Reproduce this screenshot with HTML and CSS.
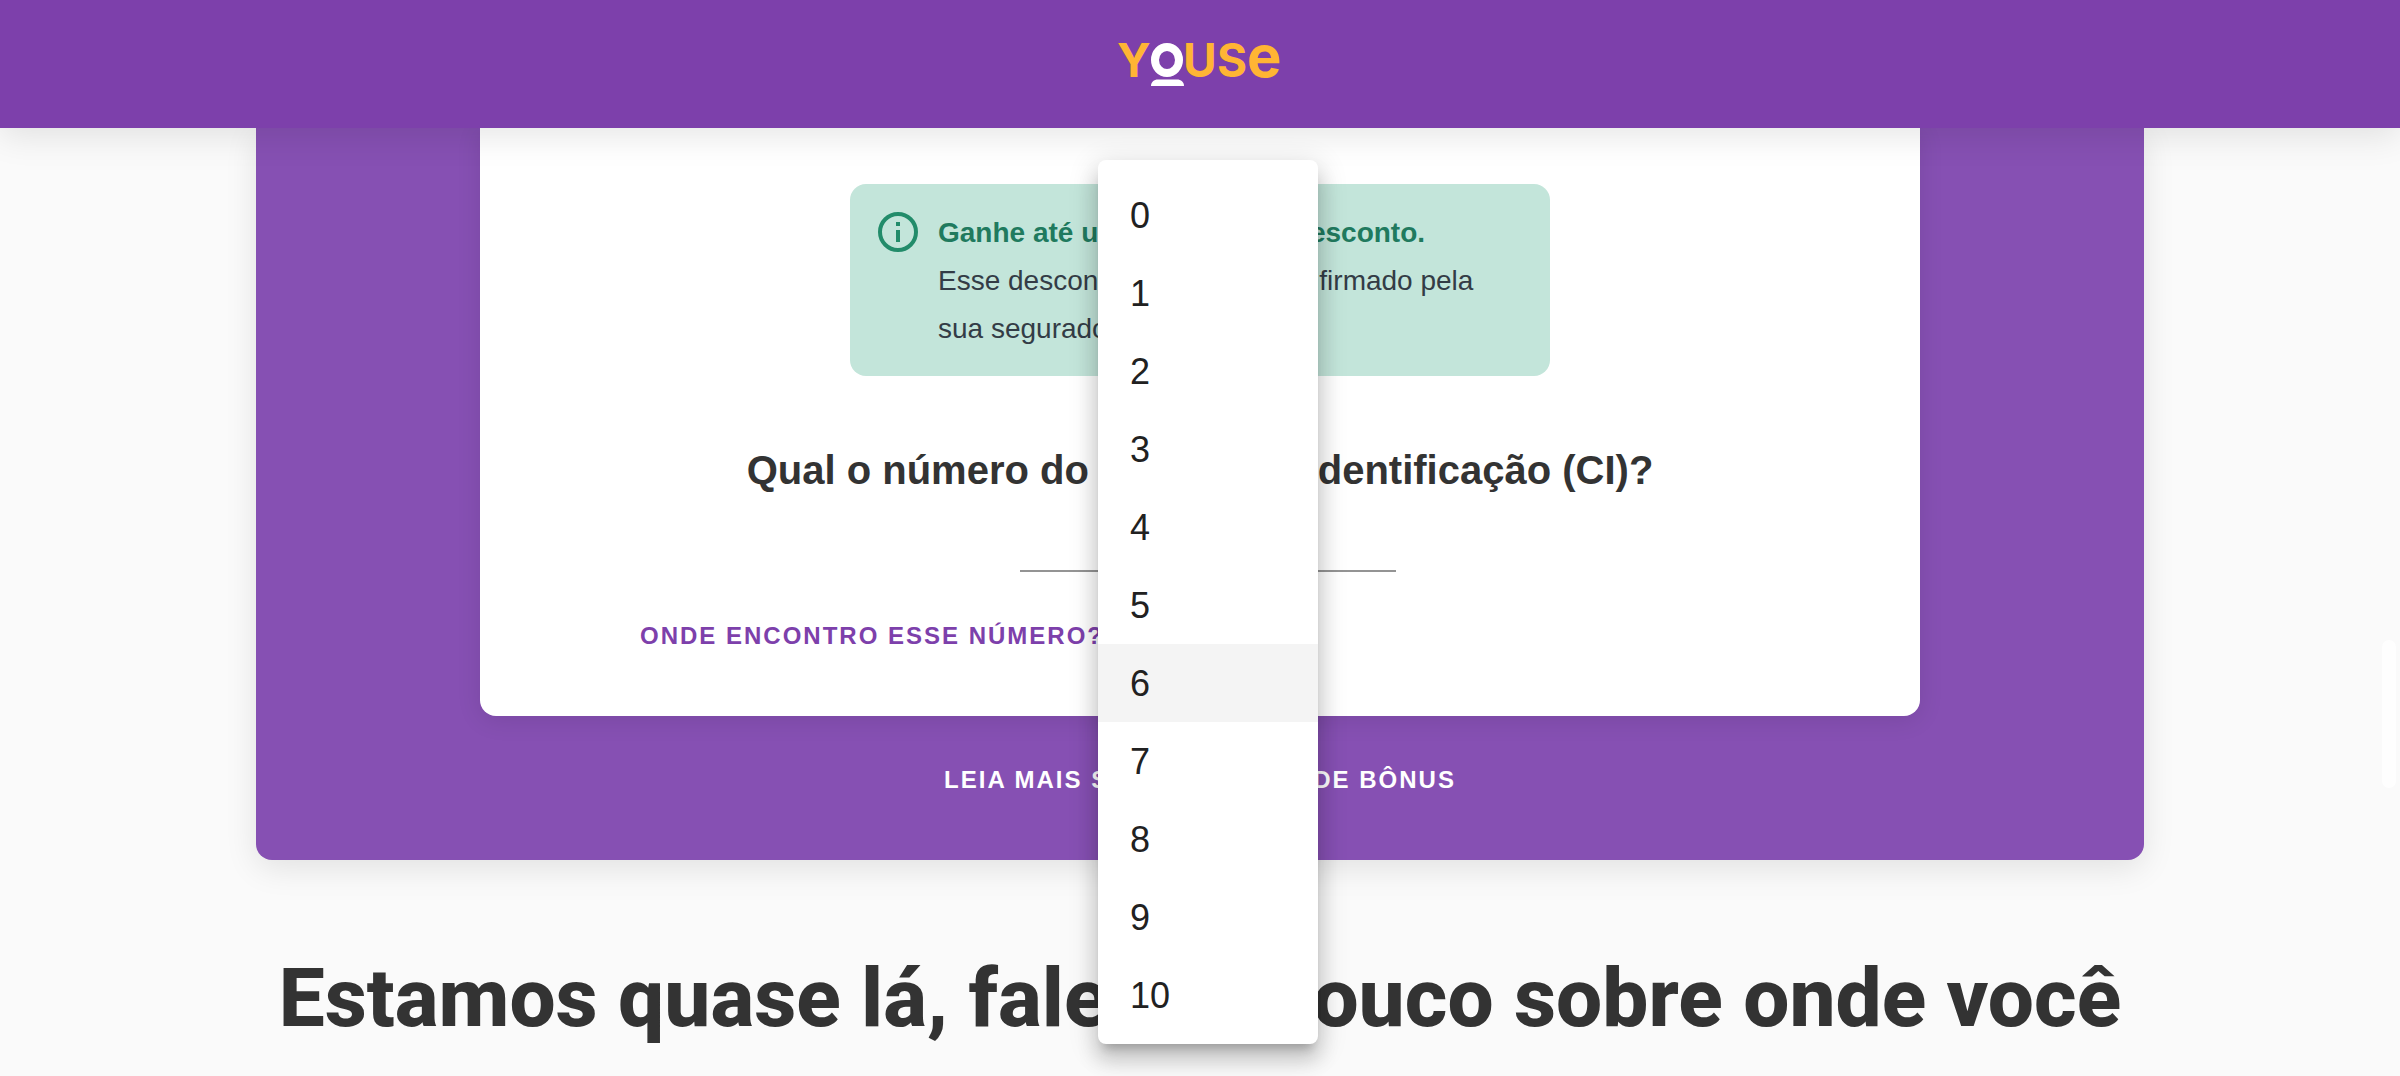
FILE: index.html
```html
<!DOCTYPE html>
<html lang="pt-BR">
<head>
  <meta charset="utf-8">
  <meta name="viewport" content="width=device-width, initial-scale=1">
  <title>Youse</title>
  <link rel="stylesheet" href="styles.css">
</head>
<body>
  <header class="topbar">
    <a class="brand" href="#" aria-label="Youse">
      <svg class="logo" viewBox="0 0 184 80" role="img" aria-label="Youse">
        <text class="logo-cap" x="9" y="53">Y</text>
        <ellipse cx="59" cy="36" rx="12" ry="13" fill="none" stroke="#fff" stroke-width="8"/>
        <path d="M43 62c0-4 3-6.500 7-6.500h19c4 0 7 2.500 7 6.500z" fill="#fff"/>
        <text class="logo-cap" x="75" y="53">U</text>
        <text class="logo-cap" x="109" y="53">S</text>
        <text class="logo-low" x="139" y="53">e</text>
      </svg>
    </a>
  </header>

  <main class="content">
    <section class="panel">
      <div class="card">
        <aside class="notice">
          <svg class="notice-icon" viewBox="0 0 40 40" aria-hidden="true">
            <circle cx="20" cy="20" r="18" fill="none" stroke="currentColor" stroke-width="4"/>
            <path d="M18 10h4v4h-4zM18 18h4v12h-4z" fill="currentColor"/>
          </svg>
          <p class="notice-text"><strong>Ganhe até uma parcela de desconto.</strong><br>Esse desconto precisa ser confirmado pela sua seguradora.</p>
        </aside>
        <h2 class="question" id="ci-label">Qual o número do Código de Identificação (CI)?</h2>
        <div class="field">
          <select class="select" aria-labelledby="ci-label">
            <option></option>
          </select>
          <ul class="menu" role="listbox" aria-labelledby="ci-label">
            <li class="option" role="option">0</li>
            <li class="option" role="option">1</li>
            <li class="option" role="option">2</li>
            <li class="option" role="option">3</li>
            <li class="option" role="option">4</li>
            <li class="option" role="option">5</li>
            <li class="option option-active" role="option">6</li>
            <li class="option" role="option">7</li>
            <li class="option" role="option">8</li>
            <li class="option" role="option">9</li>
            <li class="option" role="option">10</li>
          </ul>
        </div>
        <a class="link" href="#">ONDE ENCONTRO ESSE NÚMERO?</a>
      </div>
      <a class="link link-light" href="#">LEIA MAIS SOBRE CLASSE DE BÔNUS</a>
    </section>
    <h1 class="title">Estamos quase lá, fale um pouco sobre onde você</h1>
  </main>
  <div class="scroll-thumb"></div>
</body>
</html>
```
FILE: styles.css
```css
* {
  box-sizing: border-box;
}

body {
  min-height: 100vh;
  margin: 0;
  background: #fafafa;
  color: #333;
  font-family: "Liberation Sans", Arial, sans-serif;
}

.topbar {
  position: relative;
  z-index: 2;
  display: flex;
  justify-content: center;
  padding: 24px 0;
  background: #7d40ab;
  box-shadow: 0 8px 32px rgba(0, 0, 0, 0.1);
}

.brand {
  display: block;
}

.logo {
  display: block;
  width: 184px;
  height: 80px;
}

.logo text {
  fill: #ffb534;
  font-family: Inter, sans-serif;
  font-weight: 700;
}

.logo-cap {
  font-size: 46px;
}

.logo-low {
  font-size: 58px;
}

.panel {
  display: flex;
  flex-direction: column;
  align-items: center;
  max-width: 1888px;
  margin: 0 auto;
  padding: 0 24px 56px;
  border-radius: 0 0 16px 16px;
  background: #8650b3;
  box-shadow: 0 8px 32px rgba(0, 0, 0, 0.1);
}

.card {
  display: flex;
  flex-direction: column;
  align-items: center;
  width: 100%;
  max-width: 1440px;
  margin-bottom: 40px;
  padding: 56px 160px;
  border-radius: 0 0 16px 16px;
  background: #fff;
  box-shadow: 0 4px 24px rgba(0, 0, 0, 0.1);
}

.notice {
  display: flex;
  align-items: flex-start;
  gap: 20px;
  width: 100%;
  max-width: 700px;
  padding: 25px 28px 23px;
  border-radius: 16px;
  background: #c3e5da;
}

.notice-icon {
  flex: none;
  width: 40px;
  height: 40px;
  margin-top: 3px;
  color: #228c6a;
}

.notice-text {
  margin: 0;
  color: #333c46;
  font-size: 28px;
  line-height: 48px;
}

.notice-text strong {
  color: #207a5e;
}

.question {
  margin: 64px 0 0;
  font-size: 40px;
  line-height: 60px;
  text-align: center;
}

.field {
  position: relative;
  width: 376px;
  max-width: 100%;
  margin: 16px 0 40px 16px;
}

.select {
  display: block;
  width: 100%;
  height: 56px;
  border: 0;
  border-bottom: 2px solid #949494;
  border-radius: 0;
  background: transparent;
  appearance: none;
  font-size: 36px;
}

.menu {
  position: absolute;
  top: -356px;
  left: 78px;
  z-index: 3;
  width: 220px;
  margin: 0;
  padding: 16px 0 10px;
  border-radius: 8px;
  background: #fff;
  box-shadow: 0 10px 10px -6px rgba(0, 0, 0, 0.2), 0 16px 20px 2px rgba(0, 0, 0, 0.14), 0 6px 28px 4px rgba(0, 0, 0, 0.12);
  color: #212121;
  font-size: 36px;
  line-height: 76px;
  list-style: none;
}

.option {
  padding: 2px 32px 0;
}

.option-active {
  background: #f4f4f4;
}

.link {
  align-self: flex-start;
  color: #7d40ab;
  font-size: 24px;
  font-weight: 700;
  letter-spacing: 2px;
  line-height: 48px;
  text-decoration: none;
}

.link-light {
  align-self: center;
  color: #fff;
}

.title {
  margin: 80px 24px 0;
  padding-bottom: 20px;
  font-family: Roboto, sans-serif;
  font-size: 82px;
  font-weight: 800;
  line-height: 116px;
  text-align: center;
}

.scroll-thumb {
  position: fixed;
  top: 640px;
  right: 4px;
  width: 14px;
  height: 148px;
  border-radius: 8px;
  background: #fefefe;
}
```
